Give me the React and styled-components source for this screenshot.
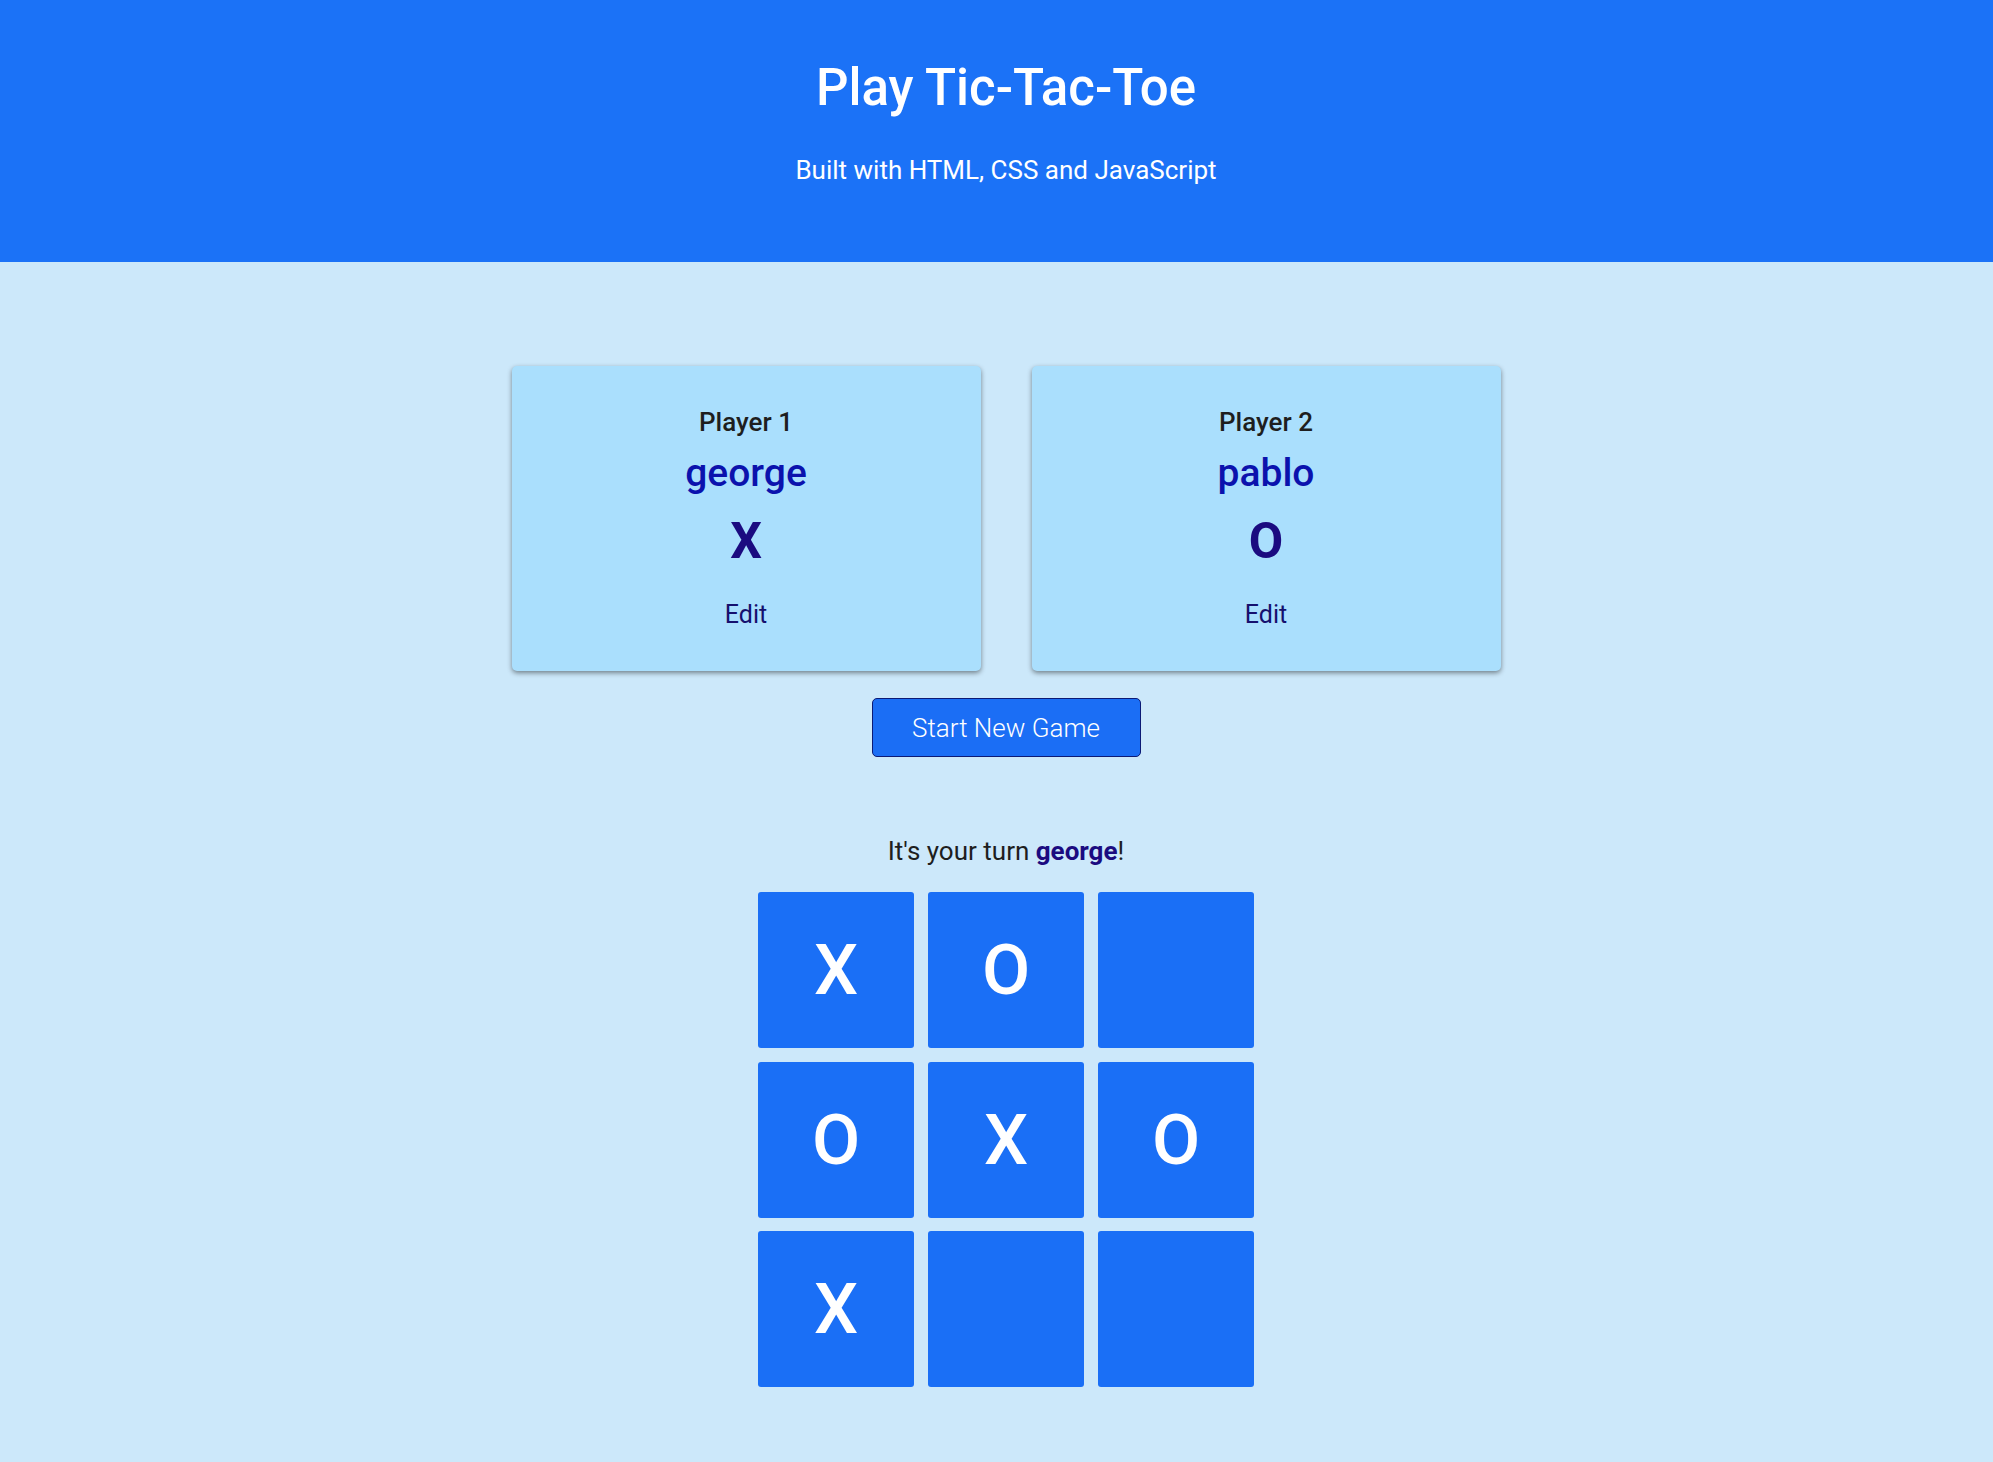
import styled, { createGlobalStyle } from "styled-components";

const GlobalStyle = createGlobalStyle`
  * {
    box-sizing: border-box;
  }
  body {
    margin: 0;
    font-family: Roboto, "Liberation Sans", sans-serif;
    background-color: #cce8fa;
    color: #1e1e1e;
  }
`;

const players = [
  { label: "Player 1", name: "george", symbol: "X" },
  { label: "Player 2", name: "pablo", symbol: "O" },
];

const board = ["X", "O", "", "O", "X", "O", "X", "", ""];

export default function App() {
  return (
    <>
      <GlobalStyle />
      <Header>
        <Title>Play Tic-Tac-Toe</Title>
        <Subtitle>Built with HTML, CSS and JavaScript</Subtitle>
      </Header>
      <Main>
        <Players>
          {players.map((p) => (
            <PlayerCard key={p.label}>
              <PlayerLabel>{p.label}</PlayerLabel>
              <PlayerName>{p.name}</PlayerName>
              <PlayerSymbol>{p.symbol}</PlayerSymbol>
              <EditButton>Edit</EditButton>
            </PlayerCard>
          ))}
        </Players>
        <StartButton>Start New Game</StartButton>
        <TurnText>
          It's your turn <ActiveName>george</ActiveName>!
        </TurnText>
        <Board>
          {board.map((value, i) => (
            <Cell key={i}>{value}</Cell>
          ))}
        </Board>
      </Main>
    </>
  );
}

const Header = styled.header`
  background-color: #1b72f7;
  color: #fff;
  text-align: center;
  height: 262px;
  padding: 57px 0 0 19px;
`;
const Title = styled.h1`
  margin: 0;
  font-size: 51px;
  font-weight: 500;
  line-height: 61px;
`;
const Subtitle = styled.p`
  margin: 37px 0 0;
  font-size: 26px;
  font-weight: 400;
  line-height: 30px;
`;
const Main = styled.main`
  display: flex;
  flex-direction: column;
  align-items: center;
  padding: 104px 0 75px 19px;
`;
const Players = styled.section`
  display: flex;
  gap: 51px;
`;
const PlayerCard = styled.article`
  width: 469px;
  height: 305px;
  background-color: #aadffd;
  border-radius: 5px;
  box-shadow: 0 2px 5px rgba(0, 0, 0, 0.45);
  display: flex;
  flex-direction: column;
  align-items: center;
  padding-top: 40px;
  text-align: center;
`;
const PlayerLabel = styled.h2`
  margin: 0;
  font-size: 26px;
  font-weight: 500;
  line-height: 33px;
  color: #1e1e1e;
`;
const PlayerName = styled.h3`
  margin: 10px 0 0;
  font-size: 39px;
  font-weight: 500;
  line-height: 48px;
  color: #0b12ad;
`;
const PlayerSymbol = styled.p`
  margin: 15px 0 0;
  font-size: 50px;
  font-weight: 700;
  line-height: 59px;
  color: #1b0b80;
`;
const EditButton = styled.button`
  margin-top: 29px;
  padding: 0;
  border: none;
  background: none;
  font-family: inherit;
  font-size: 25px;
  line-height: 29px;
  color: #15106e;
  cursor: pointer;
`;
const StartButton = styled.button`
  margin-top: 27px;
  width: 269px;
  height: 59px;
  background-color: #1b6ef5;
  border: 1px solid #0c1a75;
  border-radius: 5px;
  color: #fff;
  font-family: inherit;
  font-size: 26px;
  font-weight: 300;
  cursor: pointer;
`;
const TurnText = styled.p`
  margin: 79px 0 0;
  font-size: 26px;
  line-height: 30px;
  color: #1e1e1e;
`;
const ActiveName = styled.span`
  font-weight: 700;
  color: #1b0b80;
`;
const Board = styled.ol`
  list-style: none;
  margin: 26px 0 0;
  padding: 0;
  display: grid;
  grid-template-columns: repeat(3, 156px);
  grid-auto-rows: 156px;
  gap: 13.5px 14px;
`;
const Cell = styled.li`
  display: flex;
  align-items: center;
  justify-content: center;
  background-color: #1a6ff6;
  border-radius: 3px;
  color: #fff;
  font-size: 70px;
  font-weight: 500;
  cursor: pointer;
`;
